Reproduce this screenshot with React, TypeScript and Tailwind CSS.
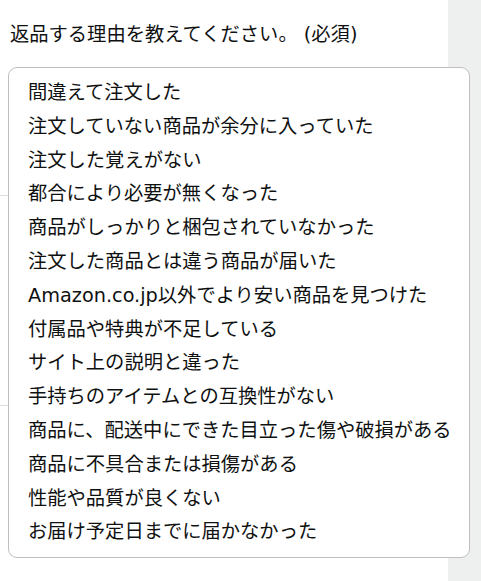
import React from "react";

const reasons = [
  "間違えて注文した",
  "注文していない商品が余分に入っていた",
  "注文した覚えがない",
  "都合により必要が無くなった",
  "商品がしっかりと梱包されていなかった",
  "注文した商品とは違う商品が届いた",
  "Amazon.co.jp以外でより安い商品を見つけた",
  "付属品や特典が不足している",
  "サイト上の説明と違った",
  "手持ちのアイテムとの互換性がない",
  "商品に、配送中にできた目立った傷や破損がある",
  "商品に不具合または損傷がある",
  "性能や品質が良くない",
  "お届け予定日までに届かなかった",
];

export default function App() {
  return (
    <div
      className="relative w-[481px] h-[581px] overflow-hidden bg-white text-[#0f1111]"
      style={{ fontFamily: '"DejaVu Sans", "Noto Sans CJK JP", sans-serif' }}
    >
      <div className="flex h-full">
        <div className="w-[448px] h-full flex flex-col">
          <div className="pl-[10px] pt-[22px] text-[19.3px] leading-[26px] whitespace-nowrap">
            返品する理由を教えてください。 (必須)
          </div>
          <div className="mt-[147px] h-px bg-[#dddddd]" />
          <div className="mt-[209px] h-px bg-[#dddddd]" />
        </div>
        <div className="flex-1 h-full bg-[#eeefef]" />
      </div>

      <ul className="absolute left-[8px] top-[67px] w-[462px] h-[491px] rounded-[9px] border border-[#bfbfbf] bg-white pt-[8px] pl-[19px]">
        {reasons.map((r) => (
          <li key={r} className="text-[19.3px] leading-[33.8px] whitespace-nowrap">
            {r}
          </li>
        ))}
      </ul>
    </div>
  );
}
